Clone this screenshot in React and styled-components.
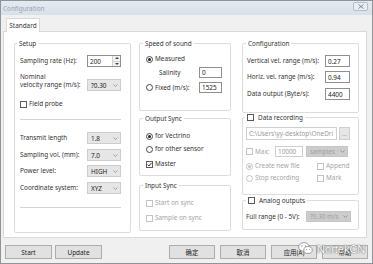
import React from 'react'
import styled, { createGlobalStyle } from 'styled-components'

const Global = createGlobalStyle`
  body {
    margin: 0;
    background: #ffffff;
    font-family: "Noto Sans", "Noto Sans CJK SC", sans-serif;
  }
  * {
    box-sizing: border-box;
  }
`

const FS = '6.4px'

const Window = styled.div`
  position: relative;
  width: 373px;
  height: 264px;
  background: #f0f0f0;
  border: 1px solid #8f949a;
  display: flex;
  flex-direction: column;
  overflow: hidden;
`

const TitleBar = styled.div`
  height: 14px;
  background: linear-gradient(#e4eaf1, #d8e0e9);
  display: flex;
  align-items: center;
  justify-content: space-between;
  padding: 0 4px 0 2px;
`

const Title = styled.span`
  font-size: ${FS};
  color: #97a3b0;
`

const CloseButton = styled.div`
  width: 15px;
  height: 9px;
  margin-top: -3px;
  border: 1px solid #b4bfcc;
  border-radius: 2px;
  background: #e9eef4;
  display: flex;
  align-items: center;
  justify-content: center;
`

const Content = styled.div`
  flex: 1;
  padding: 0 5px 0 2px;
  display: flex;
  flex-direction: column;
`

const TabStrip = styled.div`
  height: 16px;
  padding-left: 3px;
  display: flex;
  align-items: flex-end;
`

const Tab = styled.div`
  width: 34px;
  height: 14px;
  margin-bottom: -1px;
  position: relative;
  z-index: 1;
  background: #ffffff;
  border: 1px solid #d9d9d9;
  border-bottom: none;
  font-size: ${FS};
  color: #333;
  display: flex;
  align-items: center;
  justify-content: center;
`

const Panel = styled.div`
  height: 207px;
  background: #ffffff;
  border: 1px solid #d9d9d9;
  padding: 7px 0 0 10px;
  display: flex;
`

const Column = styled.div`
  width: ${(p) => p.$w}px;
  margin-left: ${(p) => p.$ml || 0}px;
  display: flex;
  flex-direction: column;
`

const Group = styled.fieldset`
  margin: ${(p) => p.$mt || 0}px 0 0 0;
  padding: 0 ${(p) => p.$pr || 0}px 0 ${(p) => p.$pl || 5}px;
  min-width: 0;
  height: ${(p) => p.$h}px;
  border: 1px solid #dcdcdc;
  border-radius: 2px;
`

const Legend = styled.legend`
  margin-left: ${(p) => p.$ml ?? -3}px;
  padding: 0 2px;
  font-size: ${FS};
  line-height: 9px;
  color: #333;
  display: flex;
  align-items: center;
  gap: 2px;
`

const Inner = styled.div`
  padding-right: ${(p) => p.$pr}px;
`

const Row = styled.div`
  display: flex;
  align-items: ${(p) => p.$align || 'center'};
  height: ${(p) => p.$h || 12}px;
  margin-top: ${(p) => p.$mt || 0}px;
  padding-left: ${(p) => p.$indent || 0}px;
`

const Label = styled.span`
  flex: ${(p) => (p.$w ? 'none' : 1)};
  width: ${(p) => (p.$w ? `${p.$w}px` : 'auto')};
  font-size: ${FS};
  line-height: 7.5px;
  color: ${(p) => (p.$disabled ? '#a5a5a5' : '#333')};
  white-space: nowrap;
`

const Field = styled.div`
  width: ${(p) => p.$w}px;
  height: ${(p) => p.$h || 12}px;
  margin-left: ${(p) => p.$ml || 0}px;
  margin-right: ${(p) => p.$mr || 0}px;
  border: 1px solid ${(p) => (p.$disabled ? '#cfcfcf' : '#8f8f8f')};
  background: #ffffff;
  font-size: ${FS};
  color: ${(p) => (p.$disabled ? '#9a9a9a' : '#222')};
  padding-left: 2px;
  display: flex;
  align-items: center;
  overflow: hidden;
  white-space: nowrap;
`

const Spin = styled.div`
  width: 34px;
  height: 12px;
  display: flex;
  border: 1px solid #8f8f8f;
  background: #ffffff;
`

const SpinValue = styled.div`
  flex: 1;
  font-size: ${FS};
  color: #222;
  padding-left: 2px;
  display: flex;
  align-items: center;
`

const SpinArrows = styled.div`
  width: 8px;
  display: flex;
  flex-direction: column;
  border-left: 1px solid #d0d0d0;
`

const SpinArrow = styled.div`
  flex: 1;
  display: flex;
  align-items: center;
  justify-content: center;
  background: #f2f2f2;
  & + & {
    border-top: 1px solid #d0d0d0;
  }
`

const Combo = styled.div`
  width: ${(p) => p.$w}px;
  height: ${(p) => p.$h || 12}px;
  margin-top: ${(p) => p.$mt || 0}px;
  margin-left: ${(p) => p.$ml || 0}px;
  border: 1px solid ${(p) => (p.$disabled ? '#c6c6c6' : '#cdcdcd')};
  background: ${(p) => (p.$disabled ? '#cccccc' : '#e6e6e6')};
  font-size: ${FS};
  color: ${(p) => (p.$disabled ? '#a0a0a0' : '#222')};
  padding: 0 2px 0 3px;
  display: flex;
  align-items: center;
  justify-content: space-between;
  white-space: nowrap;
  overflow: hidden;
`

const Box = styled.span`
  width: 7px;
  height: 7px;
  flex: none;
  margin-right: 2px;
  border: 1px solid ${(p) => (p.$disabled ? '#c4c4c4' : '#5a5a5a')};
  background: #ffffff;
  display: inline-flex;
  align-items: center;
  justify-content: center;
`

const Radio = styled.span`
  width: 7px;
  height: 7px;
  flex: none;
  margin-right: 2px;
  border-radius: 50%;
  border: 1px solid ${(p) => (p.$disabled ? '#c4c4c4' : '#4a4a4a')};
  background: #ffffff;
  display: inline-flex;
  align-items: center;
  justify-content: center;
  &::after {
    content: '';
    width: 3px;
    height: 3px;
    border-radius: 50%;
    background: ${(p) => (p.$disabled ? '#c4c4c4' : '#222')};
    display: ${(p) => (p.$on ? 'block' : 'none')};
  }
`

const Separator = styled.div`
  height: 1px;
  background: #d5d5d5;
  margin: ${(p) => p.$mt}px 9px 0 0;
`

const SmallButton = styled.div`
  width: 11px;
  height: 13px;
  margin-left: 2px;
  border: 1px solid #cfcfcf;
  background: #e6e6e6;
  font-size: ${FS};
  color: #a0a0a0;
  display: flex;
  align-items: center;
  justify-content: center;
`

const ButtonBar = styled.div`
  margin-top: 7px;
  height: 14px;
  display: flex;
  justify-content: space-between;
  margin-right: -1px;
`

const ButtonGroup = styled.div`
  display: flex;
  gap: ${(p) => p.$gap}px;
  margin-left: ${(p) => p.$ml || 0}px;
`

const Button = styled.div`
  width: ${(p) => p.$w}px;
  height: 14px;
  background: #e1e1e1;
  border: 1px solid #adadad;
  font-size: ${FS};
  color: #222;
  display: flex;
  align-items: center;
  justify-content: center;
`

const Watermark = styled.div`
  position: absolute;
  left: 297px;
  top: 241px;
  display: flex;
  align-items: center;
  gap: 4px;
  font-family: "Liberation Sans", sans-serif;
  font-size: 11px;
  color: #ffffff;
  text-shadow: 0 0 1px #555, 0 0 2px #777;
`

const Chevron = () => (
  <svg width="5" height="3" viewBox="0 0 5 3" style={{ flex: 'none' }}>
    <path d="M0.5 0.5 L2.5 2.5 L4.5 0.5" fill="none" stroke="#8a8a8a" strokeWidth="0.8" />
  </svg>
)

const Tick = () => (
  <svg width="5" height="5" viewBox="0 0 5 5">
    <path d="M0.6 2.6 L2 4 L4.5 0.8" fill="none" stroke="#222" strokeWidth="0.9" />
  </svg>
)

const Triangle = ({ up }) => (
  <svg width="4" height="2" viewBox="0 0 4 2">
    <path d={up ? 'M0 2 L2 0 L4 2 Z' : 'M0 0 L2 2 L4 0 Z'} fill="#444" />
  </svg>
)

const Check = ({ children, on, disabled, mt, h = 10, indent = 0, w }) => (
  <Row $mt={mt} $h={h} $indent={indent}>
    <Box $disabled={disabled}>{on && <Tick />}</Box>
    <Label $disabled={disabled} $w={w}>{children}</Label>
  </Row>
)

const Option = ({ children, on, disabled, mt, h = 10, w }) => (
  <Row $mt={mt} $h={h}>
    <Radio $on={on} $disabled={disabled} />
    <Label $disabled={disabled} $w={w}>{children}</Label>
  </Row>
)

const SetupRow = ({ label, value, mt }) => (
  <Row $mt={mt}>
    <Label>{label}</Label>
    <Combo $w={34}>
      {value}
      <Chevron />
    </Combo>
  </Row>
)

const WeChat = () => (
  <svg width="15" height="13" viewBox="0 0 15 13">
    <ellipse cx="6" cy="5" rx="5.3" ry="4.3" fill="#fff" stroke="#888" strokeWidth="0.8" />
    <ellipse cx="10" cy="8" rx="4.2" ry="3.5" fill="#fff" stroke="#888" strokeWidth="0.8" />
    <circle cx="4" cy="4" r="0.7" fill="#888" />
    <circle cx="7.5" cy="4" r="0.7" fill="#888" />
    <circle cx="8.6" cy="7.5" r="0.5" fill="#888" />
    <circle cx="11.4" cy="7.5" r="0.5" fill="#888" />
  </svg>
)

export default function App() {
  return (
    <Window>
      <Global />
      <TitleBar>
        <Title>Configuration</Title>
        <CloseButton>
          <svg width="6" height="5" viewBox="0 0 6 5">
            <path d="M0.5 0.5 L5.5 4.5 M5.5 0.5 L0.5 4.5" stroke="#7d8896" strokeWidth="1" />
          </svg>
        </CloseButton>
      </TitleBar>
      <Content>
        <TabStrip>
          <Tab>Standard</Tab>
        </TabStrip>
        <Panel>
          <Column $w={117}>
            <Group $h={194} $pr={0}>
              <Legend>Setup</Legend>
              <Inner $pr={9}>
                <Row $mt={7}>
                  <Label>Sampling rate (Hz):</Label>
                  <Spin>
                    <SpinValue>200</SpinValue>
                    <SpinArrows>
                      <SpinArrow>
                        <Triangle up />
                      </SpinArrow>
                      <SpinArrow>
                        <Triangle />
                      </SpinArrow>
                    </SpinArrows>
                  </Spin>
                </Row>
                <Row $mt={6} $h={18} $align="flex-start">
                  <Label>
                    Nominal
                    <br />
                    velocity range (m/s):
                  </Label>
                  <Combo $w={34} $mt={6}>
                    ?0.30
                    <Chevron />
                  </Combo>
                </Row>
              </Inner>
              <Check mt={8}>Field probe</Check>
              <Separator $mt={10} />
              <Inner $pr={9}>
                <SetupRow mt={12} label="Transmit length" value="1.8" />
                <SetupRow mt={5} label="Sampling vol. (mm):" value="7.0" />
                <SetupRow mt={4} label="Power level:" value="HIGH" />
                <SetupRow mt={5} label="Coordinate system:" value="XYZ" />
              </Inner>
              <Separator $mt={13} />
            </Group>
          </Column>

          <Column $w={92} $ml={8}>
            <Group $h={72} $pl={6}>
              <Legend>Speed of sound</Legend>
              <Option on mt={6}>Measured</Option>
              <Row $mt={3} $h={11} $indent={13}>
                <Label>Salinity</Label>
                <Field $w={23} $h={11} $mr={8}>0</Field>
              </Row>
              <Row $mt={4} $h={11}>
                <Radio />
                <Label>Fixed (m/s):</Label>
                <Field $w={23} $h={11} $mr={8}>1525</Field>
              </Row>
            </Group>
            <Group $h={62} $mt={3} $pl={6}>
              <Legend>Output Sync</Legend>
              <Option on mt={8}>for Vectrino</Option>
              <Option mt={3}>for other sensor</Option>
              <Check on mt={5}>Master</Check>
            </Group>
            <Group $h={50} $mt={5} $pl={6}>
              <Legend>Input Sync</Legend>
              <Check disabled mt={8}>Start on sync</Check>
              <Check disabled mt={5}>Sample on sync</Check>
            </Group>
          </Column>

          <Column $w={117} $ml={11}>
            <Group $h={74} $pl={4} $pr={8}>
              <Legend $ml={-1}>Configuration</Legend>
              <Row $mt={7}>
                <Label>Vertical vel. range (m/s):</Label>
                <Field $w={25}>0.27</Field>
              </Row>
              <Row $mt={4}>
                <Label>Horiz. vel. range (m/s):</Label>
                <Field $w={25}>0.94</Field>
              </Row>
              <Row $mt={5}>
                <Label>Data output (Byte/s):</Label>
                <Field $w={25}>4400</Field>
              </Row>
            </Group>
            <Group $h={82} $pl={3} $pr={8}>
              <Legend $ml={-1}>
                <Box />
                Data recording
              </Legend>
              <Row $mt={5} $h={13}>
                <Field $w={91} $h={13} $disabled>
                  C:\Users\yy-desktop\OneDri
                </Field>
                <SmallButton>...</SmallButton>
              </Row>
              <Row $mt={6} $h={11}>
                <Box $disabled />
                <Label $disabled $w={20}>Max:</Label>
                <Field $w={28} $h={11} $disabled>10000</Field>
                <Combo $w={42} $h={11} $ml={3} $disabled>
                  samples
                  <Chevron />
                </Combo>
              </Row>
              <Row $mt={4} $h={10}>
                <Radio $on $disabled />
                <Label $disabled $w={62}>Create new file</Label>
                <Box $disabled />
                <Label $disabled>Append</Label>
              </Row>
              <Row $mt={2} $h={10}>
                <Radio $disabled />
                <Label $disabled $w={62}>Stop recording</Label>
                <Box $disabled />
                <Label $disabled>Mark</Label>
              </Row>
            </Group>
            <Group $h={34} $mt={1} $pl={3} $pr={7}>
              <Legend $ml={0}>
                <Box />
                Analog outputs
              </Legend>
              <Row $mt={6} $h={11}>
                <Label>Full range (0 - 5V):</Label>
                <Combo $w={45} $h={11} $disabled>
                  ?0.30 m/s
                  <Chevron />
                </Combo>
              </Row>
            </Group>
          </Column>
        </Panel>
        <ButtonBar>
          <ButtonGroup $gap={3} $ml={2}>
            <Button $w={47}>Start</Button>
            <Button $w={47}>Update</Button>
          </ButtonGroup>
          <ButtonGroup $gap={5}>
            <Button $w={46}>确定</Button>
            <Button $w={46}>取消</Button>
            <Button $w={46}>应用(A)</Button>
            <Button $w={46}>帮助</Button>
          </ButtonGroup>
        </ButtonBar>
      </Content>
      <Watermark>
        <WeChat />
        NortekCN
      </Watermark>
    </Window>
  )
}
